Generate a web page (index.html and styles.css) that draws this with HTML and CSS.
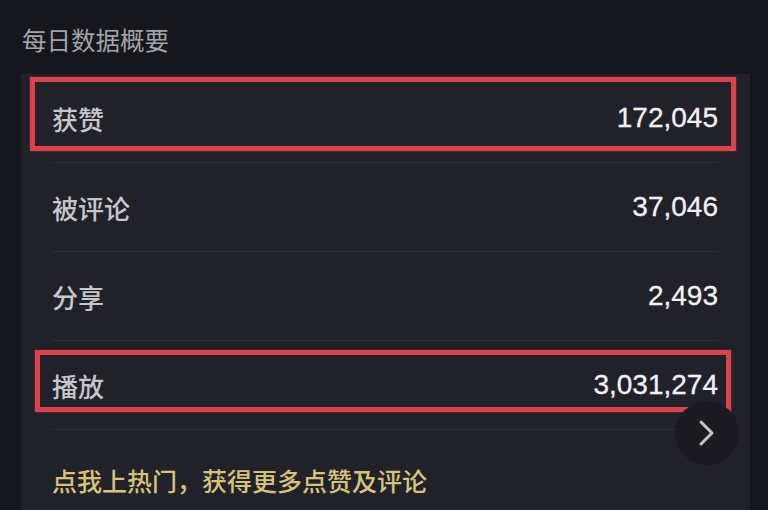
FILE: index.html
```html
<!DOCTYPE html>
<html lang="zh-CN">
<head>
<meta charset="utf-8">
<title>每日数据概要</title>
<link rel="stylesheet" href="styles.css">
</head>
<body>
<div class="page">
  <h2 class="title">每日数据概要</h2>
  <div class="card">
    <div class="row hl hl-1"><span class="label">获赞</span><span class="value">172,045</span></div>
    <div class="row"><span class="label">被评论</span><span class="value">37,046</span></div>
    <div class="row"><span class="label">分享</span><span class="value">2,493</span></div>
    <div class="row hl hl-2"><span class="label">播放</span><span class="value">3,031,274</span></div>
    <div class="footer">点我上热门，获得更多点赞及评论</div>
    <div class="more">
      <svg width="22" height="28" viewBox="0 0 22 28"><path d="M5 3 L16 14 L5 25" fill="none" stroke="#c4c4c8" stroke-width="3" stroke-linecap="round" stroke-linejoin="round"/></svg>
    </div>
  </div>
</div>
</body>
</html>
```

FILE: styles.css
```css
html, body {
  margin: 0;
  padding: 0;
  background: #16161d;
  height: 100%;
  overflow: hidden;
}
.page {
  padding: 25px 18px 0 21px;
  font-family: "Noto Sans CJK SC", "Noto Sans", sans-serif;
}
.title {
  margin: 0;
  font-size: 24.5px;
  line-height: 30px;
  font-weight: 400;
  color: #a3a3a8;
  padding-left: 1px;
}
.card {
  position: relative;
  margin-top: 19px;
  background: #212129;
  height: 460px;
}
.row {
  position: relative;
  margin: 0 32px 0 31px;
  height: 88px;
  border-bottom: 1px solid #2d2d36;
  display: flex;
  align-items: center;
  justify-content: space-between;
}
.label {
  font-size: 26px;
  font-weight: 500;
  color: #c6c6cb;
}
.value {
  font-family: "Liberation Sans", Arial, sans-serif;
  font-size: 28px;
  color: #f2f2f4;
  -webkit-text-stroke: 0.3px #f2f2f4;
}
.hl::after {
  content: "";
  position: absolute;
  border: 5px solid #d9434c;
  box-shadow: 0 0 2px rgba(217, 67, 76, 0.6);
  pointer-events: none;
}
.hl-1::after {
  left: -22px;
  right: -18px;
  top: 3px;
  bottom: 11px;
}
.hl-2::after {
  left: -17px;
  right: -13px;
  top: 9px;
  bottom: 17px;
}
.footer {
  padding: 37px 0 0 31px;
  font-size: 25px;
  font-weight: 500;
  line-height: 26px;
  color: #d7c27c;
}
.more {
  position: absolute;
  left: 654px;
  top: 327px;
  width: 64px;
  height: 64px;
  border-radius: 50%;
  background: #1a1a20;
  display: flex;
  align-items: center;
  justify-content: center;
}
```
